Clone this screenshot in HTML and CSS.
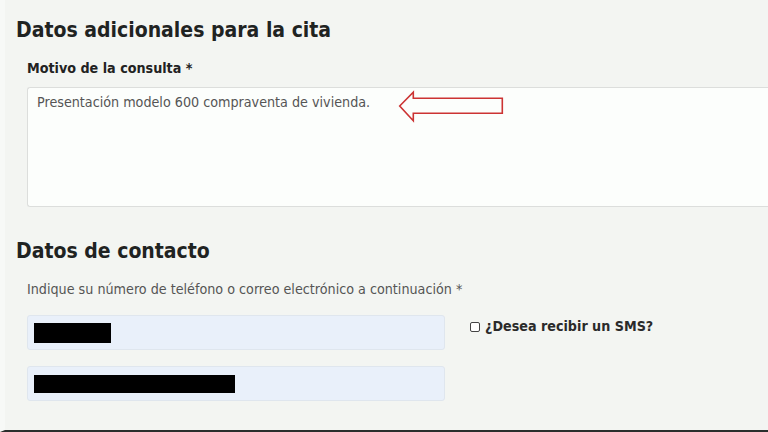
FILE: index.html
```html
<!DOCTYPE html>
<html lang="es">
<head>
<meta charset="utf-8">
<link rel="stylesheet" href="styles.css">
</head>
<body>
<div class="page">
  <main class="content">
    <h2 class="section-title">Datos adicionales para la cita</h2>
    <div class="field">
      <label class="field-label">Motivo de la consulta *</label>
      <div class="textarea-wrap">
        <div class="textarea">Presentación modelo 600 compraventa de vivienda.</div>
        <svg class="arrow" width="108" height="33" viewBox="0 0 108 33">
          <path d="M2.7 16 L16.3 2.3 L16.3 8.3 L105.3 8.3 L105.3 23.3 L16.3 23.3 L16.3 30.7 Z" fill="none" stroke="#cc3333" stroke-width="1.6" stroke-linejoin="miter"/>
        </svg>
      </div>
    </div>
    <h2 class="section-title second">Datos de contacto</h2>
    <p class="hint">Indique su número de teléfono o correo electrónico a continuación *</p>
    <div class="contact">
      <div class="inputs">
        <div class="input"><span class="redact r1"></span></div>
        <div class="input"><span class="redact r2"></span></div>
      </div>
      <label class="sms"><span class="box"></span>¿Desea recibir un SMS?</label>
    </div>
  </main>
</div>
</body>
</html>
```
FILE: styles.css
```css
html, body {
  margin: 0;
  padding: 0;
}
body {
  width: 768px;
  height: 432px;
  overflow: hidden;
  background: #f3f5f2;
  font-family: "DejaVu Sans Condensed", "DejaVu Sans", sans-serif;
  color: #222;
}
.page {
  height: 430px;
  border-bottom: 2px solid #2a2e2c;
  border-left: 5px solid #f7f9f7;
}
.content {
  padding: 15px 0 0 11px;
}
.section-title {
  margin: 0;
  font-size: 21px;
  font-weight: bold;
  color: #1f2322;
  line-height: 30px;
}
.field {
  padding-left: 11px;
  margin-top: 15px;
}
.field-label {
  display: block;
  font-size: 14.2px;
  font-weight: bold;
  color: #222;
  line-height: 17px;
}
.textarea-wrap {
  position: relative;
  margin-top: 10px;
}
.textarea {
  height: 106px;
  border: 1px solid #dcdedc;
  border-right: none;
  border-radius: 3px 0 0 3px;
  background: #fcfefc;
  padding: 6px 9px;
  font-size: 14.2px;
  color: #555;
  line-height: 17px;
}
.arrow {
  position: absolute;
  left: 370px;
  top: 3px;
}
.second {
  margin-top: 29px;
}
.hint {
  margin: 15px 0 0 11px;
  font-size: 14.2px;
  color: #555;
  line-height: 17px;
}
.contact {
  display: flex;
  align-items: flex-start;
  margin: 17px 0 0 11px;
}
.inputs {
  display: flex;
  flex-direction: column;
  gap: 16px;
}
.input {
  width: 410px;
  height: 33px;
  background: #e9f0fa;
  border: 1px solid #dfe6ee;
  border-radius: 3px;
  padding-left: 6px;
  display: flex;
  align-items: center;
}
.redact {
  display: block;
  background: #000;
}
.r1 { width: 77px; height: 20px; }
.r2 { width: 201px; height: 18px; }
.sms {
  display: flex;
  align-items: center;
  margin: 3px 0 0 25px;
  font-size: 14.2px;
  font-weight: bold;
  color: #2a2a2a;
  line-height: 17px;
}
.box {
  width: 8px;
  height: 8px;
  border: 1px solid #444;
  border-radius: 2px;
  margin-right: 5px;
  background: #fff;
}
```
